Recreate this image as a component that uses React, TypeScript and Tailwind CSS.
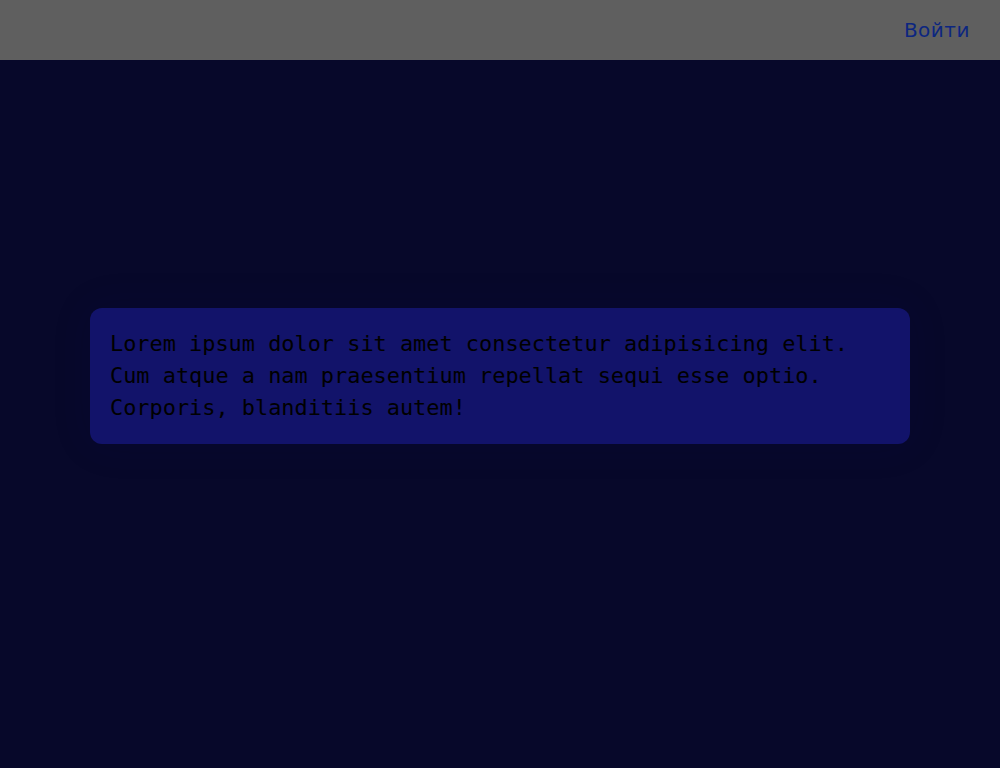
export default function App() {
  return (
    <div className="min-h-screen flex flex-col bg-[#07082a]">
      {/* Шапка */}
      <header className="h-[60px] shrink-0 bg-[#5f5f5f] flex items-center justify-end px-[30px]">
        <button className="font-['DejaVu_Sans',sans-serif] text-[20px] text-[#0c2680] tracking-[0.5px]">
          Войти
        </button>
      </header>

      {/* Основная часть с карточкой */}
      <main className="flex-1 pt-[248px] px-[90px]">
        <div className="rounded-xl bg-[#12136a] px-5 py-5 shadow-[0_0_40px_4px_rgba(18,19,106,0.07)]">
          <p className="font-['DejaVu_Sans_Mono',monospace] text-[21.9px] leading-[32px] text-black">
            Lorem ipsum dolor sit amet consectetur adipisicing elit.
            <br />
            Cum atque a nam praesentium repellat sequi esse optio.
            <br />
            Corporis, blanditiis autem!
          </p>
        </div>
      </main>
    </div>
  );
}
